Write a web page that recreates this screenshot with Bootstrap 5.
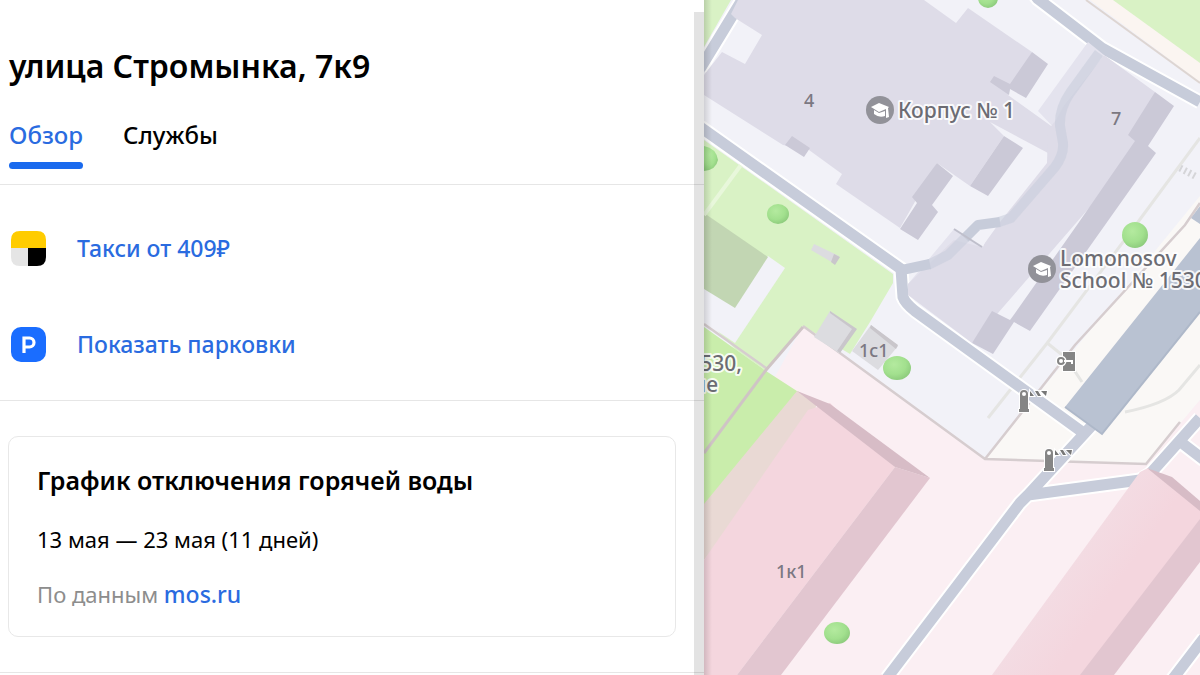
<!DOCTYPE html>
<html lang="ru">
<head>
<meta charset="utf-8">
<meta name="viewport" content="width=device-width, initial-scale=1">
<title>улица Стромынка, 7к9</title>
<link href="https://cdn.jsdelivr.net/npm/bootstrap@5.3.0/dist/css/bootstrap.min.css" rel="stylesheet">
<style>
  body { font-family: "Noto Sans", "Open Sans", sans-serif; color: #000; }
  a { color: #2a6be0; text-decoration: none; }
  .info-pane { flex: 44 1 0; min-width: 0; }
  .map-pane { flex: 31 1 0; min-width: 0; }
  .section-line { border-bottom: 1px solid #e6e6e6; }
  .pane-head { padding: 46px 28px 15px 9px; }
  .pane-head h1 { font-size: 32px; line-height: 40px; font-weight: 600; margin-bottom: 27px; }
  .pane-tabs { gap: 40px; }
  .pane-tabs .nav-link { padding: 0; font-size: 24px; line-height: 44px; font-weight: 500; color: #000; }
  .pane-tabs .nav-link::after { content: ""; display: block; height: 7px; margin-top: 5px; border-radius: 4px; }
  .pane-tabs .nav-link.active { color: #2a6be0; }
  .pane-tabs .nav-link.active::after { background: #1a6aee; }
  .actions { padding: 46px 11px 38px; gap: 61px; }
  .actions a { font-size: 23px; line-height: 35px; font-weight: 500; gap: 31px; }
  .water-wrap { padding: 35px 28px 35px 8px; }
  .water-card { padding: 26px 28px 27px; border: 1px solid #e8e8e8; border-radius: 10px; }
  .water-card h2 { font-size: 25px; line-height: 34px; font-weight: 600; margin-bottom: 27px; }
  .water-card p { font-size: 22px; line-height: 30px; margin-bottom: 25px; }
  .water-card p:last-child { margin-bottom: 0; color: #8d8d8d; }
  .water-card a { font-weight: 500; font-size: 23px; }
  .scroll-track { width: 10px; top: 12px; background: rgba(0,0,0,.11); }
  .map-pane svg { font-family: "Noto Sans", "Open Sans", sans-serif; }
  .house-no { font-size: 18px; fill: #7b7882; font-weight: 500; }
  .place { font-size: 21px; font-weight: 500; fill: #6c6c73; stroke: #fff; stroke-width: 4px; stroke-opacity: .85; stroke-linejoin: round; paint-order: stroke; }
  .pane-shade { width: 8px; background: linear-gradient(90deg, rgba(0,0,0,.14), transparent); }
</style>
<script src="https://cdn.jsdelivr.net/npm/bootstrap@5.3.0/dist/js/bootstrap.bundle.min.js"></script>
</head>
<body>
<div class="d-flex min-vh-100 overflow-hidden">
  <main class="info-pane position-relative bg-white">
    <header class="pane-head section-line">
      <h1>улица Стромынка, 7к9</h1>
      <nav class="nav pane-tabs" aria-label="Разделы">
        <a class="nav-link active" aria-current="page" href="#overview">Обзор</a>
        <a class="nav-link" href="#services">Службы</a>
      </nav>
    </header>
    <section class="actions d-flex flex-column section-line">
      <a class="d-flex align-items-center" href="#taxi">
        <svg width="35" height="35" viewBox="0 0 35 35" aria-hidden="true">
          <clipPath id="taxi-clip"><path d="M9 0h17q9 0 9 9v17q0 9-9 9H9q-9 0-9-9V9q0-9 9-9z"/></clipPath>
          <g clip-path="url(#taxi-clip)"><path fill="#fc0" d="M0 0h35v17H0z"/><path fill="#e5e5e5" d="M0 17h17v18H0z"/><path d="M17 17h18v18H17z"/></g>
        </svg>
        Такси от 409₽
      </a>
      <a class="d-flex align-items-center" href="#parking">
        <svg width="35" height="35" viewBox="0 0 35 35" aria-hidden="true">
          <rect width="35" height="35" rx="10" fill="#1a6dff"/>
          <path d="M13 26V11h5.500a4.500 4.500 0 0 1 0 9H13" fill="none" stroke="#fff" stroke-width="3.200"/>
        </svg>
        Показать парковки
      </a>
    </section>
    <section class="water-wrap section-line">
      <article class="water-card">
        <h2>График отключения горячей воды</h2>
        <p>13 мая — 23 мая (11 дней)</p>
        <p>По данным <a href="#mos">mos.ru</a></p>
      </article>
    </section>
    <div class="scroll-track position-absolute end-0 bottom-0"></div>
  </main>

  <aside class="map-pane position-relative overflow-hidden">
    <svg class="position-absolute top-0 start-0 w-100 h-100" viewBox="704 0 496 675" preserveAspectRatio="xMidYMid slice" role="img" aria-label="Карта">
      <defs>
        <radialGradient id="crown" cx=".4" cy=".35" r=".7"><stop offset="0" stop-color="#b4ea9f"/><stop offset=".6" stop-color="#a2e08e"/><stop offset="1" stop-color="#8bc97b"/></radialGradient>
        <linearGradient id="wall" gradientUnits="userSpaceOnUse" x1="1060" y1="560" x2="1110" y2="595"><stop offset="0" stop-color="#f3dde4"/><stop offset="1" stop-color="#f4d6de"/></linearGradient>
        <g id="school"><circle r="14" fill="#929299"/><path fill="#fff" d="M-9-3L-1-7 9-3 8-2 9 7 6 8 6-1-1 2zM-6 0L-1 3 5 1V6Q-1 8-6 4z"/></g>
        <g id="gate"><path fill="#858585" stroke="#fff" stroke-width="2" paint-order="stroke" d="M-4 9V-6a4 4 0 0 1 8 0V9H5v3H-5V9z"/><circle cy="-6" r="2" fill="#fff"/><path fill="#777" stroke="#fff" stroke-width="2" paint-order="stroke" d="M6-9l4 5H6zM11-9h3l3 5h-3zM17-9h6l-1 5z"/></g>
      </defs>

      <!-- territories -->
      <path fill="#f2f2f8" d="M704 0h496v675H704z"/>
      <path fill="#d9f2c5" d="M704 0h27l-27 47zM704 140L893 274v9L870 322l-20 32-47-28-37 45-31-22-31-32z"/>
      <path fill="#fbf5f1" d="M1090 0h25l85 62v20z"/>
      <path fill="#d9f2c5" d="M1113 0h87v63z"/>
      <path stroke="#ddd5d2" stroke-width="2" fill="none" d="M1086 0l114 83"/>
      <path fill="#faf8f6" d="M985 459L1200 196v204l-54 65z"/>
      <path fill="#fbeff3" d="M803 326l182 133 161 5 54-64v275H704V505z"/>
      <path fill="#c9edab" d="M704 327l62 44 34 22-50 58-46 54z"/>
      <path fill="#f2f2f8" d="M768 256l17 12-50 75-31-21v-33z"/>
      <path fill="#c2d6b3" d="M704 213l64 44-33 51-31-19z"/>
      <path stroke="#e8f7db" stroke-width="4" d="M741 165l-37 50"/>
      <g fill="none" stroke="#d6cdcf" stroke-width="2.500">
        <path d="M704 324l62 44M803 326l182 133 161 5 34-42M985 459l90-114 110-120 15-22"/>
        <path stroke="#cfc4c5" stroke-width="3" d="M803 327l-37 43-62 83"/>
      </g>
      <g fill="none" stroke="#e5e5e3" stroke-width="3">
        <path d="M988 418l60-76 90-120 62-84M1046 342l20 16 16 24M1125 412q40-8 54-22l21-25"/>
      </g>
      <path stroke="#d5d5d8" stroke-width="7" stroke-dasharray="2 3" d="M1180 168l15 8"/>

      <!-- roads -->
      <g fill="none" stroke-linejoin="round">
        <path stroke="#fff" stroke-width="15" d="M742 0l-42 69M700 127l201 142 2 28q2 6 12 14l170 123M1034-6l4 5 64 49 98 54M1200 418l-50 56-10 6-112 15M1096 421l-68 74-8 8-133 175M1178 440l26 20M1172 680l32-42"/>
        <path stroke="#c7ccda" stroke-width="11" d="M742 0l-42 69M700 127l201 142 2 28q2 6 12 14l170 123M1034-6l4 5 64 49 98 54M1200 418l-50 56-10 6-112 15M1096 421l-68 74-8 8-133 175M1178 440l26 20M1172 680l32-42"/>
      </g>

      <!-- school buildings -->
      <path fill="#dedce8" d="M738 0L924 0 956 23 968 8 1032 52 1010 89 1008 95 1054 128 1048 153 990 122 1004 136 970 186 937 163 900 228 836 184 842 174 809 150 783 145 704 95 704 75 722 52 745 64 762 35 735 18 731 14z"/>
      <path fill="#e4e3ee" d="M1088 42L1104 55 1064 105 1056 130 1038 111zM954 229L982 247 940 275 908 284z"/>
      <path fill="#dedce8" d="M1104 55L1155 92 1148 140 972 343 908 295 908 284 954 240 982 247 1000 222 1047 163 1048 130 1056 120 1064 105z"/>
      <path fill="#f2f2f8" d="M978 240l12-10-7 17z"/>
      <path fill="#cbc9d7" d="M785 145l7-9 18 12-6 9zM937 163l16 13-21 29 6 7-20 28-18-11 17-26-5-6zM1004 136l19 12-35 48-18-10zM1032 52l16 12-22 34-16-9-1 6-19-13 4-6 16 8zM1155 92l19 14-26 40 8 7-126 178-16-9-21 32-21-11 20-32 18 9 3-4 64-91 58-84-7-6z"/>
      <g fill="none" stroke="#c7ccda" stroke-width="10" stroke-linejoin="round">
        <path stroke-opacity=".55" d="M1099 53l-29 40q-11 16-10 33l3 17q1 12-8 24l-44 51-12 4M966 237l-18 18-20 10"/>
        <path d="M1000 222l-22 3-13 13M930 264l-28 6"/>
      </g>
      <path stroke="#bfbfcb" stroke-width="2" d="M954 229l28 18"/>

      <!-- blue block and small structures -->
      <path fill="#b9c2d2" d="M1065 407l135-169v74l-98 122zM1191 218l9-12v18z"/>
      <path fill="none" stroke="#aeb8c9" stroke-width="2" d="M1065 407l37 27 98-122"/>
      <path fill="#dcdce0" d="M830 311l26 18-17 24-25-16zM871 325l27 21-20 24-26-19zM814 244l25 12-4 8-24-14z"/>
      <path fill="#c9c6cb" d="M830 311l27 18-17 24-3-2 15-22-22-16zM871 325l27 20-2 4-26-21zM834 254l6 3-5 8-4-3z"/>

      <!-- pink buildings -->
      <path fill="#e9d9d4" d="M797 391l20 10-5 25-108 134v-56z"/>
      <path fill="#f4d6de" d="M808 410l22-7 65 64-158 208h-33V560z"/>
      <path fill="#e2c6d0" d="M895 467l35 11-149 197h-44z"/>
      <path fill="#d7bcc6" d="M797 391l33 13 100 74-35-11-62-48z"/>
      <path fill="url(#wall)" d="M1140 472l8-4 52 42v10l-119 155h-89z"/>
      <path fill="#e2c6d0" d="M1200 519v43l-86 113h-34z"/>
      <path fill="#d7bcc6" d="M1147 468l25 9 28 24v10z"/>

      <!-- trees -->
      <g fill="url(#crown)">
        <path d="M704 146q12 2 14 14-2 10-14 11z"/>
        <circle cx="988" cy="-2" r="10"/>
        <ellipse cx="778" cy="214" rx="11" ry="10"/>
        <circle cx="1135" cy="235" r="13"/>
        <ellipse cx="897" cy="368" rx="14" ry="12"/>
        <ellipse cx="837" cy="633" rx="13" ry="11"/>
      </g>

      <!-- pins -->
      <use href="#school" x="880" y="110"/>
      <use href="#school" x="1042" y="269"/>
      <use href="#gate" x="1024" y="400"/>
      <use href="#gate" x="1049" y="459"/>
      <path fill="#858585" stroke="#fff" stroke-width="2" paint-order="stroke" d="M1063 352h12v19h-12z"/>
      <circle cx="1061" cy="361" r="3" fill="#fff" stroke="#fff" stroke-width="5"/>
      <circle cx="1061" cy="361" r="3" fill="#fff" stroke="#858585" stroke-width="2"/>
      <path stroke="#fff" stroke-width="2" fill="none" d="M1064 361h8v3"/>

      <!-- labels -->
      <g class="house-no">
        <text x="804" y="107">4</text><text x="1111" y="125">7</text><text x="859" y="357">1с1</text><text x="776" y="578">1к1</text>
      </g>
      <g class="place">
        <text x="898" y="118">Корпус № 1</text>
        <text x="1060" y="266">Lomonosov</text><text x="1060" y="288">School № 1530</text>
        <text x="742" y="371" text-anchor="end">530,</text><text x="718" y="392" text-anchor="end">ие</text>
      </g>
    </svg>
    <div class="pane-shade position-absolute top-0 bottom-0 start-0"></div>
  </aside>
</div>
</body>
</html>
